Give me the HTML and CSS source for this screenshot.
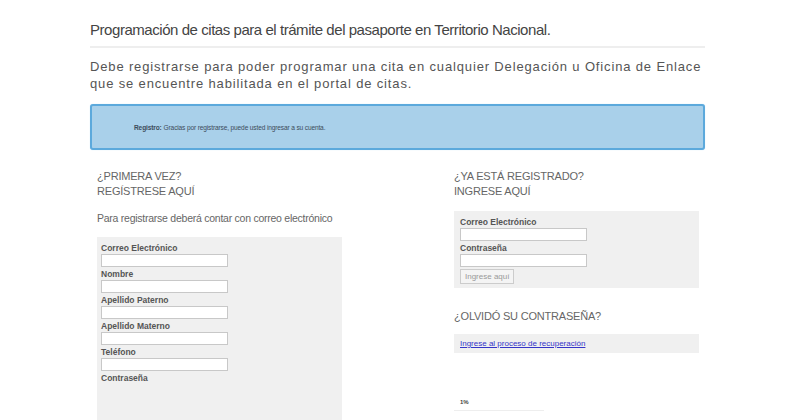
FILE: index.html
```html
<!DOCTYPE html>
<html>
<head>
  <title>Programación de citas</title>
  <link rel="stylesheet" href="styles.css">
</head>
<body>
  <div class="page">
    <h1 class="title">Programación de citas para el trámite del pasaporte en Territorio Nacional.</h1>
    <p class="intro">Debe registrarse para poder programar una cita en cualquier Delegación u Oficina de Enlace que se encuentre habilitada en el portal de citas.</p>

    <div class="notice">
      <b>Registro:</b> Gracias por registrarse, puede usted ingresar a su cuenta.
    </div>

    <div class="columns">
      <div class="col-left">
        <h2 class="section-title">¿PRIMERA VEZ?<br>REGÍSTRESE AQUÍ</h2>
        <p class="hint">Para registrarse deberá contar con correo electrónico</p>
        <div class="form-box register">
          <label>Correo Electrónico</label>
          <input type="text">
          <label>Nombre</label>
          <input type="text">
          <label>Apellido Paterno</label>
          <input type="text">
          <label>Apellido Materno</label>
          <input type="text">
          <label>Teléfono</label>
          <input type="text">
          <label>Contraseña</label>
        </div>
      </div>

      <div class="col-right">
        <h2 class="section-title">¿YA ESTÁ REGISTRADO?<br>INGRESE AQUÍ</h2>
        <div class="form-box login">
          <label>Correo Electrónico</label>
          <input type="text">
          <label>Contraseña</label>
          <input type="password">
          <button type="button">Ingrese aquí</button>
        </div>

        <h2 class="section-title forgot">¿OLVIDÓ SU CONTRASEÑA?</h2>
        <div class="form-box recover">
          <a href="#">Ingrese al proceso de recuperación</a>
        </div>

        <div class="progress">
          <span>1%</span>
        </div>
      </div>
    </div>
  </div>
</body>
</html>
```

FILE: styles.css
```css
body {
  margin: 0;
  background-color: #fff;
  font-family: "Liberation Sans", Arial, sans-serif;
  color: #555;
}

.page {
  width: 615px;
  margin-left: 90px;
  padding-top: 21px;
}

.title {
  margin: 0;
  padding-bottom: 8px;
  border-bottom: 2px solid #eee;
  font-size: 15px;
  font-weight: normal;
  letter-spacing: -0.45px;
  color: #444;
  line-height: 17px;
}

.intro {
  margin: 10px 0 0;
  font-size: 13px;
  line-height: 17px;
  letter-spacing: 0.85px;
  color: #555;
}

.notice {
  margin-top: 12px;
  height: 42px;
  padding-left: 42px;
  display: flex;
  align-items: center;
  background-color: #a9d0ea;
  border: 2px solid #5ca9dc;
  border-radius: 3px;
  font-size: 6.6px;
  letter-spacing: -0.15px;
  color: #3d4c5c;
  box-shadow: 0 0 1px #b5dcf5;
}

.notice b {
  margin-right: 2px;
}

.columns {
  display: flex;
  margin-top: 19px;
}

.col-left {
  width: 357px;
  padding-left: 7px;
}

.col-right {
  width: 245px;
}

.section-title {
  margin: 0;
  font-size: 11px;
  font-weight: normal;
  line-height: 15px;
  letter-spacing: -0.2px;
  color: #666;
}

.hint {
  margin: 13px 0 13px;
  font-size: 10.5px;
  letter-spacing: -0.25px;
  color: #666;
}

.form-box {
  width: 245px;
  box-sizing: border-box;
  background-color: #f0f0f0;
  padding: 4px 6px 0;
}

.form-box label {
  display: block;
  font-size: 8.5px;
  font-weight: bold;
  color: #555;
  line-height: 12px;
  padding-top: 1px;
}

.form-box input {
  display: block;
  width: 127px;
  height: 13px;
  box-sizing: border-box;
  margin: 0;
  border: 1px solid #c8c8c8;
  background-color: #fff;
}

.register {
  height: 190px;
  padding-left: 4px;
}

.login {
  margin-top: 12px;
  height: 77px;
}

.login button {
  display: block;
  margin-top: 2px;
  height: 15px;
  padding: 0 4px;
  font-family: "Liberation Sans", Arial, sans-serif;
  font-size: 8px;
  color: #999;
  background-color: #f4f4f4;
  border: 1px solid #ccc;
}

.forgot {
  margin-top: 21px;
}

.recover {
  margin-top: 10px;
  height: 19px;
  padding-top: 5px;
  font-size: 8px;
  line-height: 10px;
}

.recover a {
  color: #3535c8;
}

.progress {
  margin-top: 45px;
  width: 84px;
  border-bottom: 1px solid #eee;
  padding: 0 0 4px 6px;
  font-size: 6px;
  line-height: 8px;
}

.progress span {
  font-weight: bold;
  color: #444;
}
```
